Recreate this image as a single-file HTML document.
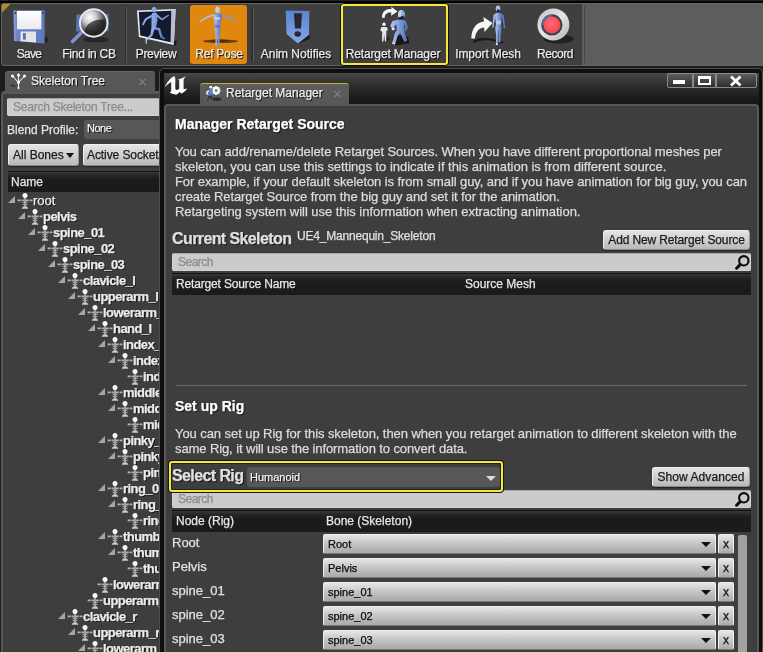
<!DOCTYPE html>
<html><head><meta charset="utf-8"><title>Retarget Manager</title>
<style>
*{box-sizing:border-box;margin:0;padding:0}
html,body{width:763px;height:652px;overflow:hidden;background:#1c1c1c;font-family:"Liberation Sans",sans-serif;font-size:12px;color:#e4e4e4}
.abs{position:absolute}
#root{-webkit-text-stroke:0.25px;will-change:transform;position:relative;width:763px;height:652px;overflow:hidden;background:#1d1d1d}
/* toolbar */
#tb{left:1px;top:3px;width:765px;height:63px;background:#5d5d5d;border:1px solid #626262;border-radius:3px}
#tbdark{left:2px;top:4px;width:579.5px;height:61px;background:#3f3f3f;border-radius:2px 0 0 2px}
.tbtn{position:absolute;top:5px;height:59px;text-align:center;color:#e8e8e8;font-size:12px;text-shadow:1px 1px 1px #000;border-radius:3px}
.tbtn span{position:absolute;left:-10px;right:-10px;top:41px;white-space:nowrap}
.tbtn svg{position:absolute;left:50%;top:2px;margin-left:-20px}
.tl{position:absolute;top:47px;width:100px;text-align:center;font-size:12px;color:#eaeaea;text-shadow:1px 1px 1px #000;white-space:nowrap}
.tsep{position:absolute;top:7px;height:55px;width:3px;background:#2b2b2b;border-right:1px solid #555}
/* left panel */
#ltab{left:5px;top:71px;width:150px;height:23px;background:#575757;border-radius:3px 3px 0 0;border-top:1px solid #666}
#lpanel{left:1px;top:91px;width:170px;height:570px;background:#3e3e3e;border:2px solid #585858;border-top-width:3px;border-radius:4px}
.search{background:#cbcbcb;border:1px solid #d4d4d4;border-top-color:#a8a8a8;border-radius:2px;color:#8b8b8b;font-size:12px;line-height:17px;padding-left:5px;white-space:nowrap;overflow:hidden}
.lbtn{background:linear-gradient(#e4e4e4,#b9b9b9);border:1px solid #f0f0f0;border-bottom-color:#8a8a8a;border-right-color:#999;border-radius:3px;color:#1a1a1a;font-size:12px;white-space:nowrap;overflow:hidden;box-shadow:0 1px 1px #222}
.hdr{background:linear-gradient(#383838 0,#242424 4px,#1b1b1b 8px,#1b1b1b);color:#e6e6e6;font-size:12px;white-space:nowrap;overflow:hidden;border-top:1px solid #111}
.trow{position:absolute;left:0;width:158px;height:16px;white-space:nowrap}
.tarr{position:absolute;top:3px}
.tbone{position:absolute;top:0;overflow:visible}
.tname{position:absolute;top:0;line-height:16px;font-size:13px;color:#ececec;text-shadow:1px 1px 0 #111}
.tname.b{font-weight:bold;letter-spacing:-0.55px}
/* right window */
#win{left:159px;top:68px;width:604px;height:600px;background:#0f0f0f;border:1px solid #4d4d4d;border-radius:5px 5px 0 0}
#title{left:164px;top:73px;width:595px;height:32px;background:linear-gradient(#474747 0,#303030 35%,#1a1a1a 80%,#161616)}
#rtab{left:200px;top:83px;width:149px;height:22px;background:linear-gradient(#5d5d5d,#575757);border-top:1px solid #c3b02c;border-radius:3px 3px 0 0}
#content{left:164px;top:104px;width:595px;height:560px;background:#3e3e3e;border:2px solid #575757;border-radius:4px}
.h1{font-weight:bold;font-size:14px;color:#fff;white-space:nowrap;text-shadow:1px 1px 1px #111}
.h2{font-weight:bold;font-size:16px;color:#e0e0e0;white-space:nowrap;letter-spacing:-0.6px;text-shadow:1px 1px 1px #111}
.p{font-size:13px;line-height:15px;color:#dcdcdc;white-space:nowrap}
.wbtn{position:absolute;top:73px;height:15px;background:linear-gradient(#5c5c5c,#2f2f2f);border:1px solid #8a8a8a;}
.rrow{position:absolute;left:167px;width:590px;height:24px}
.rn{position:absolute;left:5px;top:1px;font-size:13px;color:#e2e2e2;white-space:nowrap}
.combo{position:absolute;left:156px;top:0;width:393px;height:20px;background:linear-gradient(#e6e6e6,#c4c4c4 50%,#a9a9a9);border:1px solid #efefef;border-bottom-color:#777;border-radius:2px;color:#0a0a0a;font-size:11px}
.combo span{position:absolute;left:4px;top:2.500px}
.dn{position:absolute;right:4px;top:7px;width:0;height:0;border-left:5px solid transparent;border-right:5px solid transparent;border-top:5px solid #111}
.xb{position:absolute;left:551px;top:0;width:16px;height:20px;background:linear-gradient(#e6e6e6,#aaa);border:1px solid #efefef;border-bottom-color:#777;border-radius:2px;color:#111;font-size:12px;text-align:center;line-height:19px}
</style></head><body><div id="root">
<svg width="0" height="0" style="position:absolute"><defs>
<g id="bone"><rect x="7.300" y="4" width="1.400" height="10" fill="#c4c4c4"/><path d="M0.600 7.300H15.400" stroke="#b2b2b2" stroke-width="1.800" stroke-dasharray="3.200 0.800"/><path d="M5.500 9.600H10.500M5.500 11.600H10.500" stroke="#b4b4b4" stroke-width="0.900"/><path d="M6 13.400H10L11.300 15.800H4.700Z" fill="#cdcdcd"/><circle cx="8" cy="2.400" r="2.500" fill="#f8f8f8"/></g>
<g id="mag"><circle cx="10.800" cy="6.800" r="4.700" fill="none" stroke="#0c0c0c" stroke-width="2.100"/><path d="M7.200 10.600L3.600 14.200" stroke="#0c0c0c" stroke-width="3" stroke-linecap="round"/></g>
</defs></svg>

<div class="abs" style="left:0;top:0;width:763px;height:3px;background:#030303;border-top:1px solid #222"></div>
<div id="tb" class="abs"></div>
<div id="tbdark" class="abs"></div>
<svg class="abs" style="left:2px;top:4px" width="10" height="10"><path d="M0 0H8.500L0 8.500Z" fill="#ad8c28"/></svg>

<div class="abs" style="left:190px;top:5px;width:57px;height:59px;background:#e0870f;border-radius:3px"></div>
<div class="abs" style="left:340px;top:3px;width:109px;height:63px;border:1px solid #111;border-radius:4px"></div>
<div class="abs" style="left:341px;top:4px;width:107px;height:61px;border:2px solid #f5e83a;border-radius:3px;background:#3f3f3f"></div>
<svg class="abs" style="left:0;top:0" width="763" height="66" viewBox="0 0 763 66">
<defs>
<linearGradient id="gSave" x1="0" y1="0" x2="1" y2="0"><stop offset="0" stop-color="#8fa3dc"/><stop offset="0.12" stop-color="#6a82c6"/><stop offset="1" stop-color="#5f79c0"/></linearGradient>
<linearGradient id="gLab" x1="0" y1="0" x2="0" y2="1"><stop offset="0" stop-color="#ffffff"/><stop offset="1" stop-color="#e9e9ee"/></linearGradient>
<radialGradient id="gLens" cx="0.36" cy="0.3" r="0.75"><stop offset="0" stop-color="#ffffff"/><stop offset="0.3" stop-color="#cfcfcf"/><stop offset="0.65" stop-color="#5a5a5a"/><stop offset="1" stop-color="#1c1c1c"/></radialGradient>
<linearGradient id="gNot" x1="0" y1="0" x2="0" y2="1"><stop offset="0" stop-color="#5a83d8"/><stop offset="1" stop-color="#86a6e0"/></linearGradient>
<linearGradient id="gFig" x1="0" y1="0" x2="1" y2="0"><stop offset="0" stop-color="#b4c8f2"/><stop offset="0.5" stop-color="#7f9cdc"/><stop offset="1" stop-color="#4f6cb6"/></linearGradient>
<radialGradient id="gRec" cx="0.45" cy="0.4" r="0.6"><stop offset="0" stop-color="#ff6a74"/><stop offset="1" stop-color="#f24652"/></radialGradient>
<linearGradient id="gRing" x1="0" y1="0" x2="1" y2="1"><stop offset="0" stop-color="#c4c4c4"/><stop offset="0.5" stop-color="#e6e6e6"/><stop offset="1" stop-color="#b0b0b0"/></linearGradient>
</defs>
<!-- save -->
<path d="M44 36.500L47.800 38V41L44.500 43.800Z" fill="#1f1f1f"/>
<path d="M13.500 10.500L44.600 10.200V43.600L14 40.900Z" fill="url(#gSave)"/>
<path d="M17 10.900H41.400V29.300H17Z" fill="url(#gLab)"/>
<path d="M20.500 31.600H36V42.500L20.500 41.200Z" fill="#e4e4e6"/>
<path d="M23 33H25.800V39.800L23 39.600Z" fill="#5571b8"/>
<circle cx="15.300" cy="13" r="0.900" fill="#2a3560"/><circle cx="42.900" cy="13" r="0.900" fill="#2a3560"/>
<!-- find -->
<ellipse cx="96" cy="39.500" rx="13" ry="3" fill="#262626"/>
<path d="M76.500 14.500L108.500 14V31L76 31.500Z" fill="#5d74b3"/>
<path d="M81.500 32.500L72.500 41.500" stroke="#7d92cf" stroke-width="3.600" stroke-linecap="round"/>
<circle cx="93.700" cy="22.900" r="13.800" fill="url(#gLens)" stroke="#e6ebfb" stroke-width="1.900"/>
<path d="M84.500 31.500C86 24 93 19 104.500 19.500C107 26 103 33.500 95 35C90 35.500 86.500 34 84.500 31.500Z" fill="#1a1a1a" opacity="0.700"/>
<!-- preview -->
<path d="M170 42L176.500 40.500V44.500L173.800 46Z" fill="#181818"/>
<path d="M137 10.400L175.700 9L173.800 45L138.900 37Z" fill="#e6e9f2"/>
<path d="M171.300 10.500L175.700 9L173.800 45L170.800 42Z" fill="#b9bfd0"/>
<path d="M138.800 12L171.300 10.800L170.600 42.200L140.300 35.600Z" fill="#141a2d"/>
<ellipse cx="154.200" cy="9.700" rx="2.300" ry="2.900" fill="#8eaae6" transform="rotate(-15 154.200 9.700)"/>
<path d="M152 13L157 13L157.500 20L156 27.500L160 28L162.500 36.500L165.500 38.500L164 39.500L160.500 37.500L158 30L154.500 29.500L152.500 35.500L147 40.500L146.800 44H145.800L145.500 39.500L150.500 34.500L151.500 27L151.500 19Z" fill="url(#gFig)"/>
<path d="M152 14.500L145 18.500L142 24.500L143.500 25.500L146.500 20L152 17Z" fill="#8eaae6"/>
<path d="M157 14L162 18.500L168.500 14.500L169 15.800L162 20.500L156.500 16.500Z" fill="#7f9cdc"/>
<!-- ref pose -->
<ellipse cx="220.500" cy="41.200" rx="17.500" ry="1.700" fill="#6a3e06"/>
<path d="M210 40.300C214 39.300 224 39.300 230 40.500C225 42.800 214 42.800 210 40.300Z" fill="#4a2b04"/>
<ellipse cx="217.500" cy="9.800" rx="2.300" ry="3.400" fill="#bccef5"/>
<path d="M216.500 12.800H218.600V15H216.500Z" fill="#6f8ccc"/>
<path d="M199.400 21.600C203 18 208.500 15.300 213.300 14.300L213.600 16C209 17 204 19.300 200.200 22.600Z" fill="#a9bfee"/>
<path d="M235.800 21.600C232 18 226.500 15.300 221.800 14.300L221.500 16C226 17 231 19.300 235 22.600Z" fill="#7f9cdc"/>
<path d="M213.200 14.200H222L221.300 20L220.200 25L220.500 28.500L219.600 38L219.800 45.800H217.900L217.700 31H217.400L217.200 45.800H215.300L215.500 38L214.600 28.500L214.900 25L213.800 20Z" fill="url(#gFig)"/>
<path d="M214.800 17.500H220.300L219.800 19.500H215.300Z" fill="#dfe8fb" opacity="0.800"/>
<path d="M215.300 25H219.800L220.100 27.500H215Z" fill="#4f6cb6" opacity="0.800"/>
<!-- anim notifies -->
<path d="M298 43.800L310.500 38.500L309.500 35L302 37Z" fill="#1c1c1c"/>
<path d="M285.700 10.500L309.300 11L309 34.700L298 43.500L286.500 34Z" fill="url(#gNot)"/>
<path d="M293.900 13.300H302L301 28.400H295Z" fill="#26282c"/>
<ellipse cx="297.700" cy="34" rx="3.300" ry="2.800" fill="#26282c"/>
<!-- retarget manager -->
<path d="M392 39L396 45.500L409.500 43L408 37L400 35Z" fill="#171717"/>
<path d="M381.500 39.500L385.500 42.500L390.500 38.500L387 36.500Z" fill="#202020"/>
<ellipse cx="401.300" cy="14.600" rx="3.300" ry="4.600" fill="#c3d3f7"/>
<path d="M401.300 10A3.300 4.600 0 0 1 401.300 19.200Z" fill="#8ea9e2"/>
<path d="M398.600 17.500L403.800 15.500L404 20.500L399.500 20.500Z" fill="#1b2135"/>
<path d="M392.300 21.300L397 19.800H404L406.200 21.500L408 27.200L405.500 31.500L404 30.800L405.500 27L404.300 24L403.800 30L407.200 40.500L404.500 42L400.200 33L397.800 35.500L395.500 43L392.500 42L394.800 33.500L396.800 30L396.300 24.500L394 26.500L395 29.500L392.300 29L390.300 25.800Z" fill="url(#gFig)"/>
<path d="M391.800 28L394.500 28.300L394.200 30.300L391.800 30Z" fill="#f1f1f1"/>
<path d="M392.500 42L395.500 43L395 44.500L392 43.800Z" fill="#e8ecf8"/>
<circle cx="384" cy="24.300" r="1.700" fill="#f6f6f6"/>
<path d="M381.500 27L386.500 27L388 29.500L386.300 31.200L386.300 41.500H384.800L384.200 34.500L383.500 41.500H382L382.200 32L380.200 30Z" fill="#e4e7ef"/>
<path d="M382 17.800C381.800 11 387 8.300 391.500 9.300L391.300 6.800L397.500 11.400L391 15.800L391.300 12.600C388 12 385 13.500 384.500 18Z" fill="#f6f6f6"/>
<!-- import mesh -->
<path d="M472.500 41C479 36.800 490 36.500 497.500 40.500L496.500 42C490 39.500 480 39.800 474 42.800Z" fill="#1a1a1a"/>
<path d="M494 43.500L503 41L504 42.500L496 45Z" fill="#1e1e1e"/>
<ellipse cx="498" cy="8.600" rx="2.300" ry="3.100" fill="#a9c0f0"/>
<path d="M496.800 9.500H499.600L499.300 12.600H497.200Z" fill="#1c2236"/>
<path d="M495 13.800L497 12.800H499.500L502 13.800L501.600 19L500.800 24L501.600 28.500L500.600 36L500.300 42.500H498.600L498.500 30H498.100L497.600 44H495.900L496.200 36L495.300 28.500L496 24L495.300 19Z" fill="url(#gFig)"/>
<path d="M494.800 13.800L493.400 15L492.300 27.500L493.500 28L495 17.500Z" fill="#9db6ea"/>
<path d="M502.200 13.800L503.600 15L505.300 28L504 28.500L502.200 17.500Z" fill="#5f7cc4"/>
<path d="M495.800 20.500H501.300L500.900 24.500H496.100Z" fill="#c4cee4" opacity="0.800"/>
<path d="M495.700 43.500H497.900V45H495.700Z" fill="#e6ebf8"/>
<path d="M471.300 38.500C471.500 28 477 22 484 21.500L483.400 17L492.500 23L484.500 32L484.200 27.500C479.500 27.500 476 31 474.800 38.500Z" fill="#f8f8f8"/>
<!-- record -->
<ellipse cx="558.500" cy="39" rx="15" ry="4.500" fill="#212121"/>
<circle cx="553.400" cy="24.500" r="16" fill="url(#gRing)"/>
<circle cx="551.900" cy="24.900" r="10.600" fill="#3d424c"/>
<path d="M541.500 24.900A10.400 10.400 0 0 1 551.900 14.500V16.500A8.400 8.400 0 0 0 543.500 24.900Z" fill="#3f78a8"/>
<circle cx="551.900" cy="24.900" r="8.500" fill="url(#gRec)"/>
</svg>
<div class="tl" style="left:-21px"><span style="letter-spacing:-0.69px">Save</span></div>
<div class="tl" style="left:39px"><span style="letter-spacing:-0.24px">Find in CB</span></div>
<div class="tl" style="left:106px"><span style="letter-spacing:-0.30px">Preview</span></div>
<div class="tl" style="left:169px"><span style="letter-spacing:-0.24px">Ref Pose</span></div>
<div class="tl" style="left:246px"><span style="letter-spacing:-0.01px">Anim Notifies</span></div>
<div class="tl" style="left:343px"><span style="letter-spacing:-0.13px">Retarget Manager</span></div>
<div class="tl" style="left:438px"><span style="letter-spacing:-0.10px">Import Mesh</span></div>
<div class="tl" style="left:505px"><span style="letter-spacing:-0.45px">Record</span></div>
<div class="abs" style="left:125px;top:7px;width:1px;height:55px;background:#2e2e2e"></div><div class="abs" style="left:126px;top:7px;width:1px;height:55px;background:#585858"></div>
<div class="abs" style="left:251px;top:7px;width:2px;height:55px;background:#303030"></div><div class="abs" style="left:253px;top:7px;width:1px;height:55px;background:#5a5a5a"></div>
<div class="abs" style="left:584px;top:6px;width:1px;height:57px;background:#474747"></div>

<!-- left panel -->
<div id="ltab" class="abs"></div>
<div id="lpanel" class="abs"></div>
<svg class="abs" style="left:9px;top:72px" width="20" height="20" viewBox="0 0 20 20"><path d="M3.500 4L9.500 10.500L15.500 4M9.500 3.500V16" stroke="#f0f0f0" stroke-width="1.1" fill="none"/><circle cx="3.500" cy="4" r="1.500" fill="#fff"/><circle cx="9.500" cy="3" r="1.500" fill="#fff"/><circle cx="15.500" cy="4" r="1.500" fill="#fff"/><circle cx="9.500" cy="10.500" r="1.400" fill="#fff"/><path d="M8 15.500H11L9.500 17.500Z" fill="#fff"/><path d="M2 13L6 14.500" stroke="#222" stroke-width="1.200"/></svg>
<div class="abs" style="left:31px;top:74px;font-size:12px;color:#ececec;text-shadow:1px 1px 1px #000;white-space:nowrap">Skeleton Tree</div>
<div class="abs" style="left:138px;top:73px;font-size:15px;color:#7d7d7d">×</div>
<div class="abs search" style="left:7px;top:98px;width:160px;height:18px;line-height:16px"><span style="letter-spacing:-0.24px">Search Skeleton Tree...</span></div>
<div class="abs" style="left:7px;top:123px;font-size:12px;color:#e2e2e2;white-space:nowrap">Blend Profile:</div>
<div class="abs" style="left:84px;top:120px;width:90px;height:18.500px;background:#575757;border-radius:3px;font-size:11px;color:#f2f2f2;padding:2px 0 0 3px;text-shadow:1px 1px 0 #000"><span style="letter-spacing:-0.50px">None</span></div>
<div class="abs lbtn" style="left:8px;top:144px;width:71px;height:22px;line-height:20px;padding-left:4px">All Bones<i style="position:absolute;right:4.500px;top:8px;width:0;height:0;border-left:4.500px solid transparent;border-right:4.500px solid transparent;border-top:5px solid #111"></i></div>
<div class="abs lbtn" style="left:83px;top:144px;width:90px;height:22px;line-height:20px;padding-left:3px"><span style="letter-spacing:-0.09px">Active Sockets</span></div>
<div class="abs hdr" style="left:8px;top:171px;width:160px;height:21px;line-height:20px;padding-left:3px">Name</div>
<div class="abs" style="left:0;top:0;width:159px;height:652px;overflow:hidden">
<div class="trow" style="top:193px"><svg class="tarr" style="left:8px" width="7" height="7" viewBox="0 0 7 7"><path d="M7 0V7H0Z" fill="#a6a6a6"/></svg><svg class="tbone" style="left:17px" width="16" height="16" viewBox="0 0 16 16"><use href="#bone"/></svg><span class="tname" style="left:33px">root</span></div>
<div class="trow" style="top:209px"><svg class="tarr" style="left:18px" width="7" height="7" viewBox="0 0 7 7"><path d="M7 0V7H0Z" fill="#a6a6a6"/></svg><svg class="tbone" style="left:27px" width="16" height="16" viewBox="0 0 16 16"><use href="#bone"/></svg><span class="tname b" style="left:43px">pelvis</span></div>
<div class="trow" style="top:225px"><svg class="tarr" style="left:28px" width="7" height="7" viewBox="0 0 7 7"><path d="M7 0V7H0Z" fill="#a6a6a6"/></svg><svg class="tbone" style="left:37px" width="16" height="16" viewBox="0 0 16 16"><use href="#bone"/></svg><span class="tname b" style="left:53px">spine_01</span></div>
<div class="trow" style="top:241px"><svg class="tarr" style="left:38px" width="7" height="7" viewBox="0 0 7 7"><path d="M7 0V7H0Z" fill="#a6a6a6"/></svg><svg class="tbone" style="left:47px" width="16" height="16" viewBox="0 0 16 16"><use href="#bone"/></svg><span class="tname b" style="left:63px">spine_02</span></div>
<div class="trow" style="top:257px"><svg class="tarr" style="left:48px" width="7" height="7" viewBox="0 0 7 7"><path d="M7 0V7H0Z" fill="#a6a6a6"/></svg><svg class="tbone" style="left:57px" width="16" height="16" viewBox="0 0 16 16"><use href="#bone"/></svg><span class="tname b" style="left:73px">spine_03</span></div>
<div class="trow" style="top:273px"><svg class="tarr" style="left:58px" width="7" height="7" viewBox="0 0 7 7"><path d="M7 0V7H0Z" fill="#a6a6a6"/></svg><svg class="tbone" style="left:67px" width="16" height="16" viewBox="0 0 16 16"><use href="#bone"/></svg><span class="tname b" style="left:83px">clavicle_l</span></div>
<div class="trow" style="top:289px"><svg class="tarr" style="left:68px" width="7" height="7" viewBox="0 0 7 7"><path d="M7 0V7H0Z" fill="#a6a6a6"/></svg><svg class="tbone" style="left:77px" width="16" height="16" viewBox="0 0 16 16"><use href="#bone"/></svg><span class="tname b" style="left:93px">upperarm_l</span></div>
<div class="trow" style="top:305px"><svg class="tarr" style="left:78px" width="7" height="7" viewBox="0 0 7 7"><path d="M7 0V7H0Z" fill="#a6a6a6"/></svg><svg class="tbone" style="left:87px" width="16" height="16" viewBox="0 0 16 16"><use href="#bone"/></svg><span class="tname b" style="left:103px">lowerarm_l</span></div>
<div class="trow" style="top:321px"><svg class="tarr" style="left:88px" width="7" height="7" viewBox="0 0 7 7"><path d="M7 0V7H0Z" fill="#a6a6a6"/></svg><svg class="tbone" style="left:97px" width="16" height="16" viewBox="0 0 16 16"><use href="#bone"/></svg><span class="tname b" style="left:113px">hand_l</span></div>
<div class="trow" style="top:337px"><svg class="tarr" style="left:98px" width="7" height="7" viewBox="0 0 7 7"><path d="M7 0V7H0Z" fill="#a6a6a6"/></svg><svg class="tbone" style="left:107px" width="16" height="16" viewBox="0 0 16 16"><use href="#bone"/></svg><span class="tname b" style="left:123px">index_01_l</span></div>
<div class="trow" style="top:353px"><svg class="tarr" style="left:108px" width="7" height="7" viewBox="0 0 7 7"><path d="M7 0V7H0Z" fill="#a6a6a6"/></svg><svg class="tbone" style="left:117px" width="16" height="16" viewBox="0 0 16 16"><use href="#bone"/></svg><span class="tname b" style="left:133px">index_02_l</span></div>
<div class="trow" style="top:369px"><svg class="tbone" style="left:127px" width="16" height="16" viewBox="0 0 16 16"><use href="#bone"/></svg><span class="tname b" style="left:143px">index_03_l</span></div>
<div class="trow" style="top:385px"><svg class="tarr" style="left:98px" width="7" height="7" viewBox="0 0 7 7"><path d="M7 0V7H0Z" fill="#a6a6a6"/></svg><svg class="tbone" style="left:107px" width="16" height="16" viewBox="0 0 16 16"><use href="#bone"/></svg><span class="tname b" style="left:123px">middle_01_l</span></div>
<div class="trow" style="top:401px"><svg class="tarr" style="left:108px" width="7" height="7" viewBox="0 0 7 7"><path d="M7 0V7H0Z" fill="#a6a6a6"/></svg><svg class="tbone" style="left:117px" width="16" height="16" viewBox="0 0 16 16"><use href="#bone"/></svg><span class="tname b" style="left:133px">middle_02_l</span></div>
<div class="trow" style="top:417px"><svg class="tbone" style="left:127px" width="16" height="16" viewBox="0 0 16 16"><use href="#bone"/></svg><span class="tname b" style="left:143px">middle_03_l</span></div>
<div class="trow" style="top:433px"><svg class="tarr" style="left:98px" width="7" height="7" viewBox="0 0 7 7"><path d="M7 0V7H0Z" fill="#a6a6a6"/></svg><svg class="tbone" style="left:107px" width="16" height="16" viewBox="0 0 16 16"><use href="#bone"/></svg><span class="tname b" style="left:123px">pinky_01_l</span></div>
<div class="trow" style="top:449px"><svg class="tarr" style="left:108px" width="7" height="7" viewBox="0 0 7 7"><path d="M7 0V7H0Z" fill="#a6a6a6"/></svg><svg class="tbone" style="left:117px" width="16" height="16" viewBox="0 0 16 16"><use href="#bone"/></svg><span class="tname b" style="left:133px">pinky_02_l</span></div>
<div class="trow" style="top:465px"><svg class="tbone" style="left:127px" width="16" height="16" viewBox="0 0 16 16"><use href="#bone"/></svg><span class="tname b" style="left:143px">pinky_03_l</span></div>
<div class="trow" style="top:481px"><svg class="tarr" style="left:98px" width="7" height="7" viewBox="0 0 7 7"><path d="M7 0V7H0Z" fill="#a6a6a6"/></svg><svg class="tbone" style="left:107px" width="16" height="16" viewBox="0 0 16 16"><use href="#bone"/></svg><span class="tname b" style="left:123px">ring_01_l</span></div>
<div class="trow" style="top:497px"><svg class="tarr" style="left:108px" width="7" height="7" viewBox="0 0 7 7"><path d="M7 0V7H0Z" fill="#a6a6a6"/></svg><svg class="tbone" style="left:117px" width="16" height="16" viewBox="0 0 16 16"><use href="#bone"/></svg><span class="tname b" style="left:133px">ring_02_l</span></div>
<div class="trow" style="top:513px"><svg class="tbone" style="left:127px" width="16" height="16" viewBox="0 0 16 16"><use href="#bone"/></svg><span class="tname b" style="left:143px">ring_03_l</span></div>
<div class="trow" style="top:529px"><svg class="tarr" style="left:98px" width="7" height="7" viewBox="0 0 7 7"><path d="M7 0V7H0Z" fill="#a6a6a6"/></svg><svg class="tbone" style="left:107px" width="16" height="16" viewBox="0 0 16 16"><use href="#bone"/></svg><span class="tname b" style="left:123px">thumb_01_l</span></div>
<div class="trow" style="top:545px"><svg class="tarr" style="left:108px" width="7" height="7" viewBox="0 0 7 7"><path d="M7 0V7H0Z" fill="#a6a6a6"/></svg><svg class="tbone" style="left:117px" width="16" height="16" viewBox="0 0 16 16"><use href="#bone"/></svg><span class="tname b" style="left:133px">thumb_02_l</span></div>
<div class="trow" style="top:561px"><svg class="tbone" style="left:127px" width="16" height="16" viewBox="0 0 16 16"><use href="#bone"/></svg><span class="tname b" style="left:143px">thumb_03_l</span></div>
<div class="trow" style="top:577px"><svg class="tbone" style="left:97px" width="16" height="16" viewBox="0 0 16 16"><use href="#bone"/></svg><span class="tname b" style="left:113px">lowerarm_twist_01_l</span></div>
<div class="trow" style="top:593px"><svg class="tbone" style="left:87px" width="16" height="16" viewBox="0 0 16 16"><use href="#bone"/></svg><span class="tname b" style="left:103px">upperarm_twist_01_l</span></div>
<div class="trow" style="top:609px"><svg class="tarr" style="left:58px" width="7" height="7" viewBox="0 0 7 7"><path d="M7 0V7H0Z" fill="#a6a6a6"/></svg><svg class="tbone" style="left:67px" width="16" height="16" viewBox="0 0 16 16"><use href="#bone"/></svg><span class="tname b" style="left:83px">clavicle_r</span></div>
<div class="trow" style="top:625px"><svg class="tarr" style="left:68px" width="7" height="7" viewBox="0 0 7 7"><path d="M7 0V7H0Z" fill="#a6a6a6"/></svg><svg class="tbone" style="left:77px" width="16" height="16" viewBox="0 0 16 16"><use href="#bone"/></svg><span class="tname b" style="left:93px">upperarm_r</span></div>
<div class="trow" style="top:641px"><svg class="tarr" style="left:78px" width="7" height="7" viewBox="0 0 7 7"><path d="M7 0V7H0Z" fill="#a6a6a6"/></svg><svg class="tbone" style="left:87px" width="16" height="16" viewBox="0 0 16 16"><use href="#bone"/></svg><span class="tname b" style="left:103px">lowerarm_r</span></div>
</div>

<!-- right window -->
<div id="win" class="abs"></div>
<div id="title" class="abs"></div>
<svg class="abs" style="left:160px;top:72px" width="32" height="28" viewBox="160 72 32 28"><path d="M164.600 87.500C167 82 171 77.500 174.400 76.100L175.300 78.400L175.300 88.500Q175.500 90 177.200 90L178.600 89.300L179.200 88.500L179.200 80.500L178 79.600C180.500 79 183.500 77.800 185.600 76.300L183.600 79.500L183.600 88.800C185 89.300 186.300 89 187.300 88.300C186 90.500 183.500 92.800 181.300 93.600L179.600 91.900C178.500 93.200 177.300 94.200 176.200 94.800C173.500 94.400 171.300 93.600 169.700 92.600L171.200 90.900L171.200 82C168.500 83.500 166.300 85.500 164.600 87.500Z" fill="#fbfbfb"/></svg>
<div id="rtab" class="abs"></div>
<svg class="abs" style="left:204px;top:84px" width="20" height="20" viewBox="0 0 20 20"><ellipse cx="13" cy="15.300" rx="4.500" ry="1.700" fill="#2a2a2a"/><path d="M16.49 5.52L16.49 7.48L14.91 8.03L15.17 7.40L15.90 8.91L14.51 10.30L13.00 9.57L13.63 9.31L13.08 10.89L11.12 10.89L10.57 9.31L11.20 9.57L9.69 10.30L8.30 8.91L9.03 7.40L9.29 8.03L7.71 7.48L7.71 5.52L9.29 4.97L9.03 5.60L8.30 4.09L9.69 2.70L11.20 3.43L10.57 3.69L11.12 2.11L13.08 2.11L13.63 3.69L13.00 3.43L14.51 2.70L15.90 4.09L15.17 5.60L14.91 4.97Z" fill="#fafafa"/><circle cx="12.1" cy="6.5" r="1.300" fill="#5a6478"/><path d="M5 5.500L8.500 5L8.800 10L7.500 12L8.500 15.500L6.800 16L5.500 12.500L4 15L3 17L2 16.500L3.500 12L4.500 9.500Z" fill="#5b7fd3"/><path d="M5 11.500L8 11.500L8.600 15.500L6.800 16L5.800 13L4.200 16.800L2.500 16.500L4 12.500Z" fill="#2b3244"/><path d="M4.500 6L2.300 7.500L2.200 10.500L3.800 10.800L3.800 8.500L5 7.800Z" fill="#f0f0f0"/><circle cx="6.800" cy="3.200" r="1.400" fill="#f4f6ff"/></svg>
<div class="abs" style="left:226px;top:86px;font-size:12px;color:#eee;text-shadow:1px 1px 1px #000;white-space:nowrap">Retarget Manager</div>
<div class="abs" style="left:333px;top:85px;font-size:15px;color:#7d7d7d">×</div>
<div class="wbtn" style="left:667px;width:26px;border-radius:2px 0 0 2px"><i class="abs" style="left:5px;top:6px;width:12px;height:4px;background:#fff"></i></div>
<div class="wbtn" style="left:693px;width:23px"><i class="abs" style="left:4px;top:2px;width:13px;height:9px;border:2px solid #fff;border-top-width:3px"></i></div>
<div class="wbtn" style="left:716px;width:41px;border-radius:0 2px 2px 0"><svg class="abs" style="left:12px;top:1px" width="14" height="12" viewBox="0 0 14 12"><path d="M2 1.500L11.500 10.500M11.500 1.500L2 10.500" stroke="#fff" stroke-width="2.800"/></svg></div>
<div id="content" class="abs"></div>

<div class="abs h1" style="left:175px;top:116px">Manager Retarget Source</div>
<div class="abs p" style="left:175px;top:144px"><span style="letter-spacing:-0.09px">You can add/rename/delete Retarget Sources. When you have different proportional meshes per</span><br><span style="letter-spacing:-0.03px">skeleton, you can use this settings to indicate if this animation is from different source.</span><br><span style="letter-spacing:-0.09px">For example, if your default skeleton is from small guy, and if you have animation for big guy, you can</span><br><span style="letter-spacing:-0.10px">create Retarget Source from the big guy and set it for the animation.</span><br><span style="letter-spacing:-0.04px">Retargeting system will use this information when extracting animation.</span></div>
<div class="abs h2" style="left:172px;top:230px">Current Skeleton</div>
<div class="abs" style="left:297px;top:229px;font-size:12px;color:#e0e0e0;white-space:nowrap;letter-spacing:-0.2px">UE4_Mannequin_Skeleton</div>
<div class="abs lbtn" style="left:603px;top:230px;width:147px;height:20px;line-height:18px;text-align:center"><span style="letter-spacing:-0.13px">Add New Retarget Source</span></div>
<div class="abs search" style="left:172px;top:253px;width:579px;height:18px;line-height:16px"><span style="letter-spacing:-0.50px">Search</span><svg class="abs" style="right:0;top:0" width="17" height="17" viewBox="0 0 17 17"><use href="#mag"/></svg></div>
<div class="abs hdr" style="left:172px;top:273px;width:579px;height:22px;line-height:21px;padding-left:4px;font-size:12px"><span style="letter-spacing:-0.16px">Retarget Source Name</span><span class="abs" style="left:293px;top:0">Source Mesh</span></div>
<div class="abs" style="left:176px;top:385px;width:571px;height:1px;background:#6a6a6a"></div>

<div class="abs h1" style="left:175px;top:398px">Set up Rig</div>
<div class="abs p" style="left:175px;top:426px"><span style="letter-spacing:-0.07px">You can set up Rig for this skeleton, then when you retarget animation to different skeleton with the</span><br><span style="letter-spacing:-0.10px">same Rig, it will use the information to convert data.</span></div>
<div class="abs search" style="left:172px;top:490px;width:579px;height:18px;line-height:17px"><span style="letter-spacing:-0.50px">Search</span><svg class="abs" style="right:0;top:0" width="17" height="17" viewBox="0 0 17 17"><use href="#mag"/></svg></div>
<div class="abs" style="left:169px;top:461px;width:334px;height:30.5px;border:2px solid #f4e83a;border-radius:3px;background:#3e3e3e;box-shadow:0 0 0 1px #151515, inset 0 0 0 1px #222"></div>
<div class="abs h2" style="left:172px;top:467px">Select Rig</div>
<div class="abs" style="left:247px;top:467px;width:253px;height:20px;background:#575757;border-radius:3px"></div>
<div class="abs" style="left:250px;top:471px;font-size:11px;color:#f2f2f2;text-shadow:1px 1px 0 #000">Humanoid</div>
<i class="abs" style="left:486px;top:476px;width:0;height:0;border-left:5px solid transparent;border-right:5px solid transparent;border-top:5px solid #ddd"></i>
<div class="abs lbtn" style="left:652px;top:467px;width:98px;height:20px;line-height:18px;text-align:center"><span style="letter-spacing:0.07px">Show Advanced</span></div>
<div class="abs hdr" style="left:172px;top:510px;width:579px;height:22px;line-height:21px;padding-left:4px;font-size:12px">Node (Rig)<span class="abs" style="left:154px;top:0">Bone (Skeleton)</span></div>
<div class="rrow" style="top:534px"><span class="rn">Root</span><div class="combo"><span>Root</span><i class="dn"></i></div><div class="xb">x</div></div>
<div class="rrow" style="top:558px"><span class="rn">Pelvis</span><div class="combo"><span>Pelvis</span><i class="dn"></i></div><div class="xb">x</div></div>
<div class="rrow" style="top:582px"><span class="rn">spine_01</span><div class="combo"><span>spine_01</span><i class="dn"></i></div><div class="xb">x</div></div>
<div class="rrow" style="top:606px"><span class="rn">spine_02</span><div class="combo"><span>spine_02</span><i class="dn"></i></div><div class="xb">x</div></div>
<div class="rrow" style="top:630px"><span class="rn">spine_03</span><div class="combo"><span>spine_03</span><i class="dn"></i></div><div class="xb">x</div></div>
<div class="abs" style="left:738px;top:535px;width:9px;height:120px;background:#a2a2a2;border-radius:2px"></div>
</div></body></html>
